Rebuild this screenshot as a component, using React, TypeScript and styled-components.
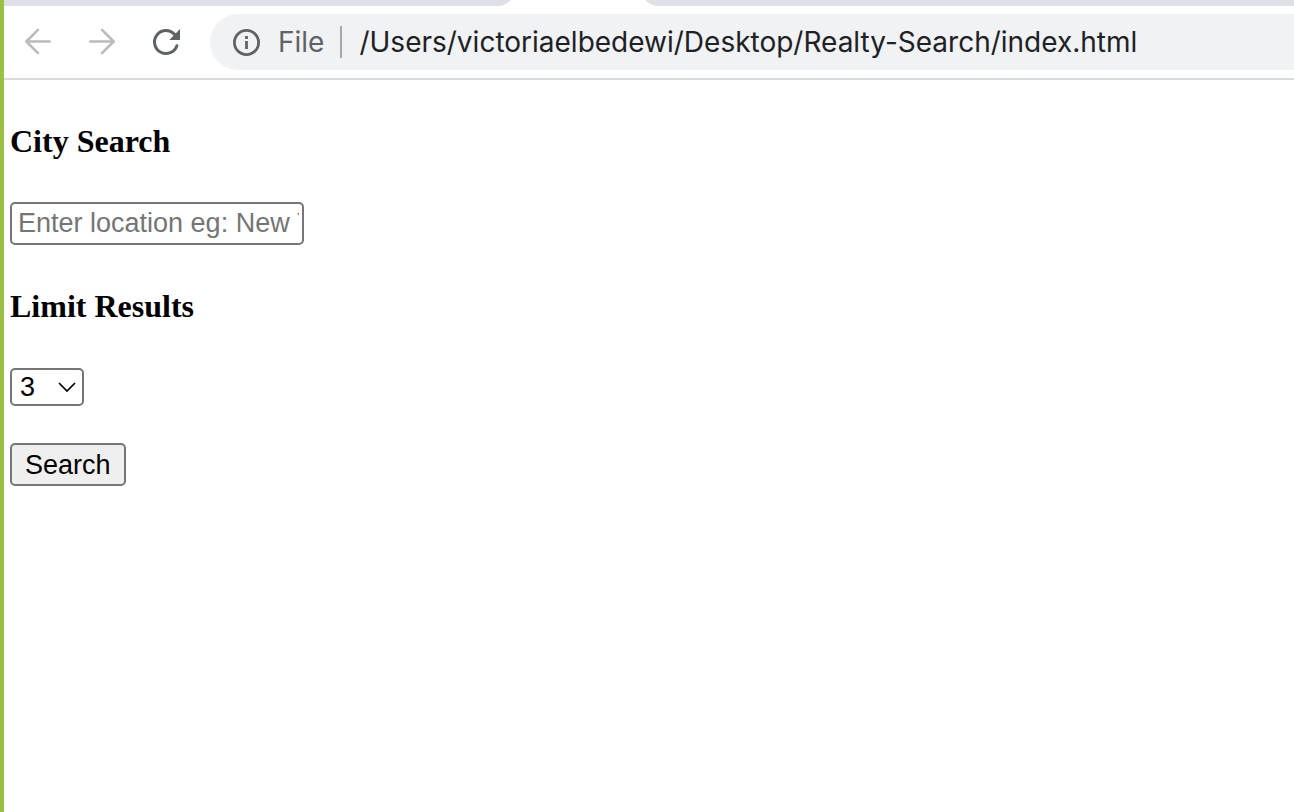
import React from "react";
import styled, { createGlobalStyle } from "styled-components";

const GlobalStyle = createGlobalStyle`
  *, *::before, *::after { box-sizing: border-box; }
  body { margin: 0; background: #fff; }
`;

const Window = styled.div`
  min-height: 100vh;
  border-left: 4px solid #9bc048;
  background: #fff;
`;

const TabStrip = styled.div`
  display: flex;
  align-items: flex-end;
  gap: 128px;
  height: 6px;
  overflow: hidden;
`;

const InactiveTabs = styled.div<{ $side: "left" | "right" }>`
  flex: ${(p) => (p.$side === "left" ? "0 0 510px" : "1")};
  height: 20px;
  background: #dee0e5;
  border-radius: ${(p) => (p.$side === "left" ? "0 0 16px 0" : "0 0 0 16px")};
`;

const Toolbar = styled.nav`
  display: flex;
  align-items: center;
  height: 74px;
  padding: 8px 0 8px 14px;
  border-bottom: 2px solid #dadbdc;
`;

const NavButton = styled.button`
  display: flex;
  width: 40px;
  height: 40px;
  margin-right: 24px;
  padding: 0;
  border: 0;
  background: none;
  color: #5f6368;

  &:disabled { color: #babbbd; }
`;

const AddressBar = styled.div`
  display: flex;
  flex: 1;
  align-items: center;
  min-width: 0;
  height: 56px;
  padding-left: 22px;
  border-radius: 28px 0 0 28px;
  background: #f1f2f4;
  font-family: Inter, "Liberation Sans", sans-serif;
  font-size: 28px;
  line-height: 32px;
`;

const Scheme = styled.span`
  margin-left: 17px;
  padding-right: 16px;
  border-right: 2px solid #a5a8ac;
  color: #5f6368;
`;

const Address = styled.input`
  flex: 1;
  min-width: 0;
  height: 40px;
  padding: 0 0 0 17px;
  border: 0;
  outline: 0;
  background: none;
  color: #202124;
  font: inherit;
`;

const SearchForm = styled.form`
  display: flex;
  flex-direction: column;
  align-items: flex-start;
  padding: 43px 6px;
`;

const FieldLabel = styled.label`
  margin-bottom: 43px;
  color: #000;
  font: bold 32px/36px "Liberation Serif", serif;
`;

const controlFont = `font: 27px/30px "Liberation Sans", sans-serif;`;

const LocationInput = styled.input`
  width: 294px;
  height: 43px;
  margin-bottom: 43px;
  padding: 0 3px 0 6px;
  border: 2px solid #767676;
  border-radius: 5px;
  background: #fff;
  color: #000;
  ${controlFont}

  &::placeholder { color: #757575; opacity: 1; }
`;

const SelectWrap = styled.div`
  display: grid;
  align-items: center;
  height: 40px;
  margin-bottom: 36px;

  & > * { grid-area: 1 / 1; }
`;

const LimitSelect = styled.select`
  width: 74px;
  height: 38px;
  padding: 0 8px;
  border: 2px solid #767676;
  border-radius: 5px;
  appearance: none;
  background: #fff;
  color: #000;
  ${controlFont}
`;

const Chevron = styled.svg`
  justify-self: end;
  margin-right: 7px;
  pointer-events: none;
`;

const SearchButton = styled.button`
  height: 43px;
  padding: 0 13px;
  border: 2px solid #767676;
  border-radius: 5px;
  background: #efefef;
  color: #000;
  ${controlFont}
`;

const BackIcon = () => (
  <svg width="40" height="40" viewBox="0 0 40 40" fill="none" stroke="currentColor" strokeWidth="2.6" strokeLinecap="round" strokeLinejoin="round">
    <path d="M31.7 19.5H9M20 7.8L8.3 19.5L20 31.2" />
  </svg>
);

const ForwardIcon = () => (
  <svg width="40" height="40" viewBox="0 0 40 40" fill="none" stroke="currentColor" strokeWidth="2.6" strokeLinecap="round" strokeLinejoin="round">
    <path d="M8.3 19.5H31M20 7.8L31.7 19.5L20 31.2" />
  </svg>
);

const ReloadIcon = () => (
  <svg width="40" height="40" viewBox="0 0 40 40" fill="none">
    <path d="M30.9 23.7A11.5 11.5 0 1 1 28.1 11.9L30 14" stroke="currentColor" strokeWidth="3" strokeLinecap="round" />
    <path d="M34 7V18H23.3Z" fill="currentColor" />
  </svg>
);

const InfoIcon = () => (
  <svg width="29" height="29" viewBox="0 0 29 29" fill="none" stroke="#5f6368" strokeWidth="2.8">
    <circle cx="14.5" cy="14.5" r="12.1" />
    <path d="M14.5 13V21M14.5 8V11" />
  </svg>
);

export default function App() {
  return (
    <Window>
      <GlobalStyle />
      <TabStrip>
        <InactiveTabs $side="left" />
        <InactiveTabs $side="right" />
      </TabStrip>
      <Toolbar aria-label="Browser">
        <NavButton type="button" aria-label="Back" disabled><BackIcon /></NavButton>
        <NavButton type="button" aria-label="Forward" disabled><ForwardIcon /></NavButton>
        <NavButton type="button" aria-label="Reload"><ReloadIcon /></NavButton>
        <AddressBar>
          <InfoIcon />
          <Scheme>File</Scheme>
          <Address
            type="text"
            aria-label="Address"
            defaultValue="/Users/victoriaelbedewi/Desktop/Realty-Search/index.html"
          />
        </AddressBar>
      </Toolbar>
      <SearchForm onSubmit={(e) => e.preventDefault()}>
        <FieldLabel htmlFor="location">City Search</FieldLabel>
        <LocationInput id="location" type="text" placeholder="Enter location eg: New York" />
        <FieldLabel htmlFor="limit">Limit Results</FieldLabel>
        <SelectWrap>
          <LimitSelect id="limit" defaultValue="3">
            <option>3</option>
            <option>5</option>
            <option>10</option>
          </LimitSelect>
          <Chevron width="20" height="12" viewBox="0 0 20 12" fill="none" stroke="#000" strokeWidth="1.7">
            <path d="M2 2L10 10L18 2" />
          </Chevron>
        </SelectWrap>
        <SearchButton type="submit">Search</SearchButton>
      </SearchForm>
    </Window>
  );
}
